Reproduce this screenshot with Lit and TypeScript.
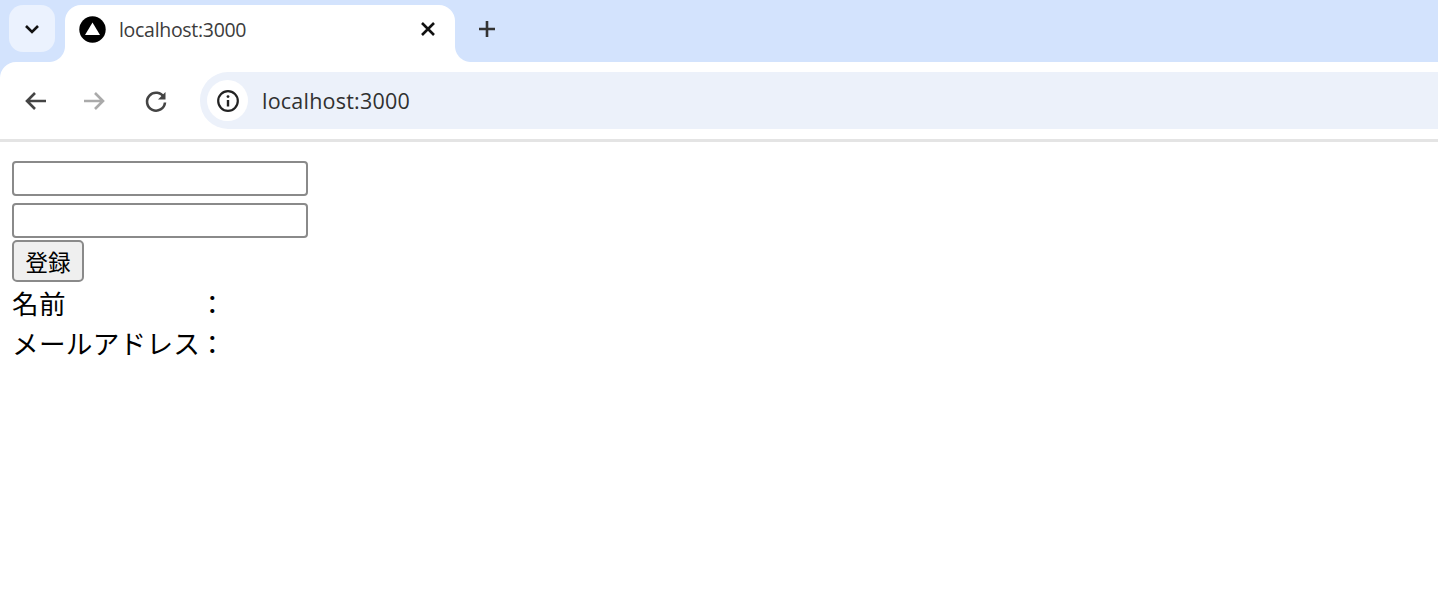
import { LitElement, html, css } from "lit";
import { customElement } from "lit/decorators.js";

@customElement("app-root")
export class AppRoot extends LitElement {
  static styles = css`
    :host { display: block; width: 1438px; height: 600px; background: #fff; overflow: hidden;
      font-family: "Noto Sans CJK JP", "Noto Sans", sans-serif; color: #000; }
    .strip { height: 62px; background: #d3e3fd; display: flex; align-items: flex-end; padding-left: 9px; box-sizing: border-box; }
    .tabsearch { width: 46px; height: 47px; margin-bottom: 10px; border-radius: 14px; background: #ebf2fe; display: flex; align-items: center; justify-content: center; flex: none; }
    .tab { position: relative; width: 390px; height: 57px; margin-left: 10px; flex: none; background: #fff; border-radius: 16px 16px 0 0; display: flex; align-items: center; padding: 0 18px 9px 14px; box-sizing: border-box; }
    .tab::before, .tab::after { content: ""; position: absolute; bottom: 0; width: 16px; height: 16px; }
    .tab::before { left: -16px; background: radial-gradient(circle at 0 0, transparent 15.5px, #fff 16.5px); }
    .tab::after { right: -16px; background: radial-gradient(circle at 100% 0, transparent 15.5px, #fff 16.5px); }
    .title { font-family: "Open Sans", "Noto Sans", sans-serif; font-size: 19.5px; letter-spacing: -0.3px; color: #3c3c3c; margin-left: 13px; flex: 1; }
    .favicon, .close, .plus { display: block; flex: none; }
    .plus { align-self: flex-start; margin: 19px 0 0 22px; }
    .toolbar { height: 77px; display: flex; align-items: center; background: #fff; border-radius: 16px 0 0 0; padding-left: 20px; box-sizing: border-box; }
    .toolbar-wrap { background: #d3e3fd; }
    .nav { display: flex; gap: 29px; align-items: center; margin-right: 29px; }
    .nav svg { display: block; }
    .nav svg.reload { margin-left: 3px; }
    .omni { flex: 1; height: 57px; background: #ecf1fa; border-radius: 28px 0 0 28px; display: flex; align-items: center; padding-left: 7px; }
    .info { width: 41px; height: 41px; border-radius: 50%; background: #fff; display: flex; align-items: center; justify-content: center; flex: none; }
    .url { font-family: "Open Sans", "Noto Sans", sans-serif; font-size: 21.5px; letter-spacing: 0.22px; color: #303030; margin-left: 14px; }
    .rule { height: 3px; background: #e4e4e4; }
    .page { padding: 19px 12px 0; display: flex; flex-direction: column; align-items: flex-start; }
    input { display: block; box-sizing: border-box; width: 296px; height: 35px; margin: 0 0 7px; padding: 0; border: 2.5px solid #8a8a8a; border-radius: 4px; background: #fff; }
    input.last { margin-bottom: 2px; }
    button { box-sizing: border-box; width: 72px; height: 42px; padding: 0; border: 2.5px solid #8a8a8a; border-radius: 5px; background: #efefef; font: inherit; font-size: 22.5px; line-height: 1; color: #000; }
    .rows { display: grid; grid-template-columns: 187px auto; margin-top: 1px; font-size: 26.6px; letter-spacing: 0.3px; line-height: 40px; white-space: nowrap; }
  `;

  render() {
    return html`
      <div class="strip">
        <div class="tabsearch">
          <svg width="18" height="12" viewBox="0 0 18 12"><path d="M3 3l6 6 6-6" fill="none" stroke="#111" stroke-width="2.6"/></svg>
        </div>
        <div class="tab">
          <svg class="favicon" width="27" height="27" viewBox="0 0 27 27">
            <circle cx="13.5" cy="13.5" r="13.2" fill="#000"/>
            <path d="M13.5 6.5L21 19H6z" fill="#fff"/>
          </svg>
          <span class="title">localhost:3000</span>
          <svg class="close" width="18" height="18" viewBox="0 0 18 18"><path d="M3 3l12 12M15 3L3 15" stroke="#111" stroke-width="2.6"/></svg>
        </div>
        <svg class="plus" width="20" height="20" viewBox="0 0 20 20"><path d="M10 2v16M2 10h16" stroke="#333" stroke-width="2.6"/></svg>
      </div>
      <div class="toolbar-wrap">
        <div class="toolbar">
          <div class="nav">
            <svg width="30" height="30" viewBox="0 0 30 30"><path d="M26 15H7M15 7l-8 8 8 8" fill="none" stroke="#444" stroke-width="2.6"/></svg>
            <svg width="30" height="30" viewBox="0 0 30 30"><path d="M5 15h19M16 7l8 8-8 8" fill="none" stroke="#aaa" stroke-width="2.6"/></svg>
            <svg class="reload" width="30" height="30" viewBox="0 0 30 30"><path d="M23 11.5A9 9 0 1 0 24 16.5" fill="none" stroke="#444" stroke-width="2.6"/><path d="M24.5 6v7.5H17z" fill="#444"/></svg>
          </div>
          <div class="omni">
            <div class="info">
              <svg width="24" height="24" viewBox="0 0 24 24"><circle cx="12" cy="12" r="9.8" fill="none" stroke="#222" stroke-width="2.2"/><path d="M12 11v6.5" stroke="#222" stroke-width="2.4"/><circle cx="12" cy="7.6" r="1.4" fill="#222"/></svg>
            </div>
            <span class="url">localhost:3000</span>
          </div>
        </div>
      </div>
      <div class="rule"></div>
      <div class="page">
        <input type="text" />
        <input class="last" type="text" />
        <button>登録</button>
        <div class="rows">
          <span>名前</span><span>：</span>
          <span>メールアドレス</span><span>：</span>
        </div>
      </div>
    `;
  }
}
